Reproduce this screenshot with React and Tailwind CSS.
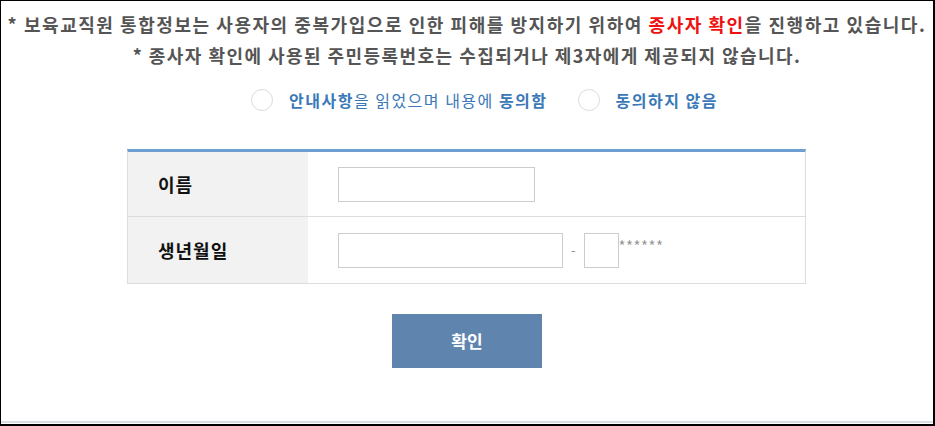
const font = { fontFamily: '"Malgun Gothic", "Noto Sans CJK KR", "Noto Sans", sans-serif' };

function Radio({ children }) {
  return (
    <label className="flex items-center gap-4 cursor-pointer">
      <span className="w-[22px] h-[22px] rounded-full border border-[#dcdcdc] bg-white" />
      <span className="text-[16px] tracking-[1.5px] text-[#3a78b8]">{children}</span>
    </label>
  );
}

export default function App() {
  return (
    <div
      className="w-[935px] h-[426px] bg-white border-l border-t border-r-2 border-b-2 border-black flex flex-col"
      style={font}
    >
      <div className="flex-1 flex flex-col items-center pt-[8px]">
        <p className="text-[18px] leading-[31px] font-bold text-[#555555] tracking-[1.55px]">
          * 보육교직원 통합정보는 사용자의 중복가입으로 인한 피해를 방지하기 위하여{" "}
          <span className="text-[#ee1111]">종사자 확인</span>을 진행하고 있습니다.
        </p>
        <p className="text-[18px] leading-[31px] font-bold text-[#555555] tracking-[1.45px]">
          * 종사자 확인에 사용된 주민등록번호는 수집되거나 제3자에게 제공되지 않습니다.
        </p>

        <div className="flex items-center gap-[30px] mt-[17px] ml-[35px]">
          <Radio>
            <b>안내사항</b>을 읽었으며 내용에 <b>동의함</b>
          </Radio>
          <Radio>
            <b>동의하지 않음</b>
          </Radio>
        </div>

        <div className="w-[679px] -ml-[1px] mt-[37px] border-t-[3px] border-[#6d9fd3] border-x border-b border-x-[#dddddd] border-b-[#dddddd]">
          <div className="grid grid-cols-[180px_1fr] h-[65px] border-b border-[#dddddd]">
            <div className="bg-[#f2f2f2] flex items-center pl-[30px] text-[18px] tracking-[1px] font-bold text-[#111]">
              이름
            </div>
            <div className="flex items-center pl-[30px]">
              <input className="w-[197px] h-[35px] border border-[#cccccc] outline-none" />
            </div>
          </div>
          <div className="grid grid-cols-[180px_1fr] h-[66px]">
            <div className="bg-[#f2f2f2] flex items-center pl-[30px] text-[18px] tracking-[1px] font-bold text-[#111]">
              생년월일
            </div>
            <div className="flex items-center pl-[30px]">
              <input className="w-[225px] h-[35px] border border-[#cccccc] outline-none" />
              <span className="mx-[8px] text-[13px] text-[#888]">-</span>
              <input className="w-[35px] h-[35px] border border-[#cccccc] outline-none" />
              <span className="-mt-[8px] text-[15px] text-[#999] tracking-[0.5px]">******</span>
            </div>
          </div>
        </div>

        <button className="mt-[30px] w-[150px] h-[54px] bg-[#5f85ae] text-white text-[17px] font-bold">
          확인
        </button>
      </div>
      <div className="h-[2px] bg-[#d6dfe8] mb-[1px]" />
    </div>
  );
}
